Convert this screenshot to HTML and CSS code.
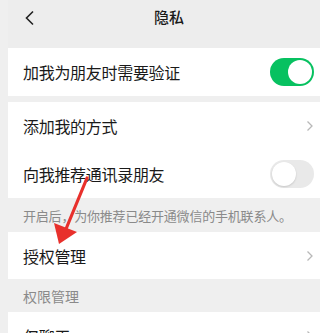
FILE: index.html
```html
<!DOCTYPE html>
<html lang="zh">
<head>
<meta charset="utf-8">
<link rel="stylesheet" href="styles.css">
</head>
<body>
<div class="page">
  <div class="nav">
    <svg class="back" width="12" height="16" viewBox="0 0 12 16"><path d="M9 1.5 L2.5 8 L9 14.5" fill="none" stroke="#222" stroke-width="1.6"/></svg>
    <div class="title">隐私</div>
  </div>
  <div class="group g1">
    <div class="row"><span class="label">加我为朋友时需要验证</span><span class="switch on"><span class="knob"></span></span></div>
  </div>
  <div class="group g2">
    <div class="row"><span class="label">添加我的方式</span><svg class="chev" width="8" height="12" viewBox="0 0 8 12"><path d="M1.5 1.5 L6 6 L1.5 10.5" fill="none" stroke="#b8b8b8" stroke-width="1.3"/></svg></div>
    <div class="row"><span class="label">向我推荐通讯录朋友</span><span class="switch off"><span class="knob"></span></span></div>
  </div>
  <div class="tip">开启后，为你推荐已经开通微信的手机联系人。</div>
  <div class="group">
    <div class="row r4"><span class="label">授权管理</span><svg class="chev" width="8" height="12" viewBox="0 0 8 12"><path d="M1.5 1.5 L6 6 L1.5 10.5" fill="none" stroke="#b8b8b8" stroke-width="1.3"/></svg></div>
  </div>
  <div class="section">权限管理</div>
  <div class="group">
    <div class="row"><span class="label">仅聊天</span><svg class="chev" width="8" height="12" viewBox="0 0 8 12"><path d="M1.5 1.5 L6 6 L1.5 10.5" fill="none" stroke="#b8b8b8" stroke-width="1.3"/></svg></div>
  </div>
  <svg class="arrow" width="320" height="333" viewBox="0 0 320 333">
    <line x1="87" y1="178" x2="66" y2="229" stroke="#e8302c" stroke-width="3.2" stroke-linecap="round"/>
    <polygon points="59,244 54,223 77,232" fill="#e8302c"/>
  </svg>
</div>
</body>
</html>
```
FILE: styles.css
```css
html, body {
  margin: 0;
  padding: 0;
  background: #ededed;
}
body {
  width: 320px;
  height: 333px;
  overflow: hidden;
  font-family: "Noto Sans CJK SC", "Noto Sans", sans-serif;
  color: #1a1a1a;
}
.page {
  position: relative;
  padding-left: 8px;
  height: 333px;
  background: #efefef;
}
.nav {
  position: relative;
  height: 48px;
  display: flex;
  align-items: center;
  justify-content: center;
  background: #ededed;
}
.back {
  position: absolute;
  left: 16px;
  top: 10px;
}
.title {
  font-size: 15px;
  font-weight: 500;
  margin-top: -16px;
  margin-left: 10px;
}
.group {
  background: #fff;
}
.g2 {
  margin-top: 6px;
}
.row {
  height: 48px;
  display: flex;
  align-items: center;
  justify-content: space-between;
  padding: 0 6px 0 15px;
}
.r4 {
  height: 47px;
}
.label {
  font-size: 16px;
  letter-spacing: -0.3px;
}
.chev {
  margin-right: 0;
}
.switch {
  position: relative;
  width: 44px;
  height: 28px;
  border-radius: 14px;
  box-sizing: border-box;
}
.switch.on {
  background: #07c160;
}
.switch.off {
  background: #e9e9e9;
}
.knob {
  position: absolute;
  top: 2px;
  width: 24px;
  height: 24px;
  border-radius: 50%;
  background: #fff;
}
.on .knob {
  right: 2px;
}
.off .knob {
  left: 2px;
  box-shadow: 0 1px 2px rgba(0,0,0,0.15);
}
.tip {
  height: 34px;
  display: flex;
  align-items: center;
  padding-left: 15px;
  font-size: 13px;
  color: #8a8a8a;
  letter-spacing: -0.2px;
}
.section {
  height: 33px;
  display: flex;
  align-items: center;
  padding-left: 15px;
  font-size: 14px;
  color: #8a8a8a;
}
.arrow {
  position: absolute;
  left: 0;
  top: 0;
}
```
